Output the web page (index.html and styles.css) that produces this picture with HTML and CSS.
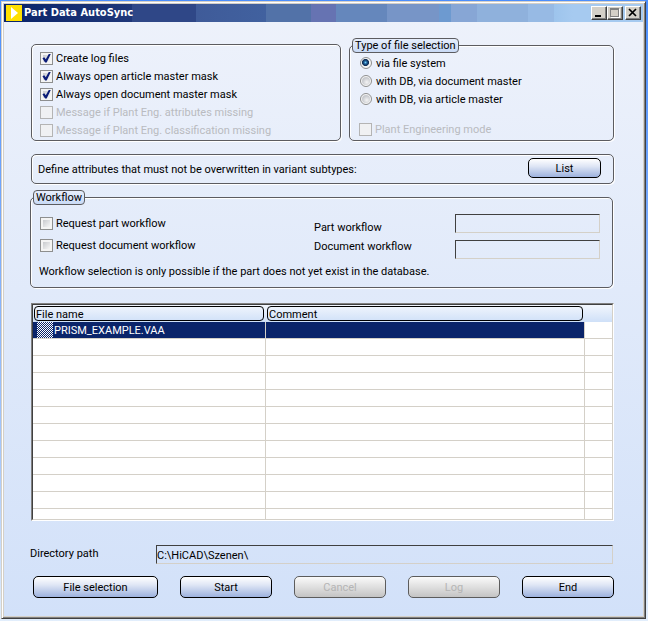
FILE: index.html
```html
<!DOCTYPE html>
<html lang="en">
<head>
<meta charset="utf-8">
<title>Part Data AutoSync</title>
<link rel="stylesheet" href="styles.css">
</head>
<body>
<main class="window">
  <header class="titlebar">
    <svg class="app-icon" viewBox="0 0 16 16" aria-hidden="true"><rect width="16" height="16" fill="#ffe000"/><path d="M5 2v12l7-6z" fill="#fff"/></svg>
    <h1 class="title">Part Data AutoSync</h1>
    <div class="window-controls">
      <button class="win-btn" aria-label="Minimize"><svg viewBox="0 0 12 10"><path d="M2 7h6v2H2z" fill="#000"/></svg></button>
      <button class="win-btn" aria-label="Maximize" disabled><svg viewBox="0 0 12 10" shape-rendering="crispEdges"><path d="M2 1h9v9H2z" fill="#fff"/><path d="M1 0h9v9H1zM2 2v6h7V2z" fill="#808080" fill-rule="evenodd"/><path d="M2 2h7v6H2z" fill="#d4d0c8"/></svg></button>
      <button class="win-btn win-close" aria-label="Close"><svg viewBox="0 0 12 10"><path d="M2 1l7 7M9 1l-7 7" stroke="#000" stroke-width="1.7"/></svg></button>
    </div>
  </header>
  <form class="content">
    <div class="options">
      <fieldset class="group general" aria-label="General options">
        <label class="option"><input type="checkbox" class="check" checked>Create log files</label>
        <label class="option"><input type="checkbox" class="check" checked>Always open article master mask</label>
        <label class="option"><input type="checkbox" class="check" checked>Always open document master mask</label>
        <label class="option off"><input type="checkbox" class="check" disabled>Message if Plant Eng. attributes missing</label>
        <label class="option off"><input type="checkbox" class="check" disabled>Message if Plant Eng. classification missing</label>
      </fieldset>
      <fieldset class="group source">
        <legend class="legend">Type of file selection</legend>
        <label class="option"><input type="radio" class="radio" name="source" checked>via file system</label>
        <label class="option"><input type="radio" class="radio" name="source">with DB, via document master</label>
        <label class="option"><input type="radio" class="radio" name="source">with DB, via article master</label>
        <label class="option off plant"><input type="checkbox" class="check" disabled>Plant Engineering mode</label>
      </fieldset>
    </div>
    <section class="group attributes">
      <span>Define attributes that must not be overwritten in variant subtypes:</span>
      <button type="button" class="btn list-btn">List</button>
    </section>
    <fieldset class="group workflow">
      <legend class="legend">Workflow</legend>
      <div class="workflow-grid">
        <div class="requests">
          <label class="option"><input type="checkbox" class="check">Request part workflow</label>
          <label class="option"><input type="checkbox" class="check">Request document workflow</label>
        </div>
        <div class="field-labels">
          <label for="part-wf">Part workflow</label>
          <label for="doc-wf">Document workflow</label>
        </div>
        <div class="fields">
          <input type="text" class="field" id="part-wf" readonly>
          <input type="text" class="field" id="doc-wf" readonly>
        </div>
      </div>
      <p class="note">Workflow selection is only possible if the part does not yet exist in the database.</p>
    </fieldset>
    <div class="list">
      <table class="files">
        <colgroup><col class="col-name"><col><col class="col-rest"></colgroup>
        <thead><tr><th><span class="head">File name</span></th><th><span class="head">Comment</span></th><th></th></tr></thead>
        <tbody>
          <tr class="selected"><td><span class="file"><span class="grip"></span>PRISM_EXAMPLE.VAA</span></td><td></td><td></td></tr>
          <tr><td></td><td></td><td></td></tr>
          <tr><td></td><td></td><td></td></tr>
          <tr><td></td><td></td><td></td></tr>
          <tr><td></td><td></td><td></td></tr>
          <tr><td></td><td></td><td></td></tr>
          <tr><td></td><td></td><td></td></tr>
          <tr><td></td><td></td><td></td></tr>
          <tr><td></td><td></td><td></td></tr>
          <tr><td></td><td></td><td></td></tr>
          <tr><td></td><td></td><td></td></tr>
          <tr class="last"><td></td><td></td><td></td></tr>
        </tbody>
      </table>
    </div>
    <div class="directory">
      <label for="dir">Directory path</label>
      <input type="text" class="field" id="dir" value="C:\HiCAD\Szenen\" readonly>
    </div>
    <div class="actions">
      <button type="button" class="btn wide">File selection</button>
      <button type="button" class="btn">Start</button>
      <button type="button" class="btn" disabled>Cancel</button>
      <button type="button" class="btn" disabled>Log</button>
      <button type="button" class="btn">End</button>
    </div>
  </form>
</main>
</body>
</html>
```
FILE: styles.css
```css
* { box-sizing: border-box; }

body {
  margin: 0;
  padding: 1px 2px 2px 1px;
  min-height: 100vh;
  background: linear-gradient(#4b8efc, #70a5fd 30%, #a9c9fb 75%, #e2eefc);
  font: 11px/14px Roboto, "Liberation Sans", sans-serif;
  color: #000;
}
button, input { font: inherit; color: inherit; }

.window {
  border: 1px solid;
  border-color: #d4d0c8 #404040 #404040 #d4d0c8;
  box-shadow: inset 1px 1px #fff, inset -1px -1px #808080, inset 2px 2px #d4d0c8, inset -2px -2px #d4d0c8;
  padding: 2px 2px 3px;
  background: linear-gradient(#eef2fb, #d2e1f9);
}

.titlebar {
  display: flex;
  align-items: center;
  height: 18px;
  padding: 0 2px;
  background: linear-gradient(90deg,
    #0a246a 0, #1f3779 20%, #2f4787 20%, #2f4787 30%, #3f5b99 30%, #41619f 41%,
    #5272a8 41%, #5272a8 48%, #6673b2 48%, #6673b2 52%, #6587bc 52%, #6587bc 60%,
    #7795c7 60%, #7795c7 68%, #6d9ad0 68%, #6d9ad0 70%, #87a6d5 70%, #87a6d5 74%,
    #8fb1dc 74%, #8fb1dc 82%, #97bae4 82%, #97bae4 86%, #9dc4ec 86%, #a6caf0 89%);
}
.app-icon { width: 16px; height: 16px; }
.title {
  flex: 1;
  margin: 0 0 0 2px;
  font: bold 11px/16px "DejaVu Sans Condensed", "DejaVu Sans", sans-serif;
  color: #fff;
}
.window-controls { display: flex; }
.win-btn {
  width: 16px;
  height: 14px;
  padding: 0 0 0 1px;
  border: 1px solid;
  border-color: #fff #404040 #404040 #fff;
  box-shadow: inset -1px -1px #808080;
  background: #d4d0c8;
}
.win-btn svg { display: block; width: 12px; height: 10px; }
.win-close { margin-left: 2px; }

.content { padding: 16px 29px 17px 27px; }

.group {
  min-width: 0;
  margin: 0;
  padding: 0 8px;
  border: 1px solid #5c5c60;
  border-radius: 5px;
  box-shadow: 1px 1px #fff, inset 1px 1px #fff;
}
.legend {
  margin-left: -7px;
  padding: 0 2px;
  border: 1px solid #5c5c60;
  border-radius: 4px;
  background: linear-gradient(#e6eefb, #c9daf6);
  line-height: 13px;
}

.options { display: grid; grid-template-columns: 310fr 265fr; gap: 8px; }
.general { margin-top: 6px; padding-top: 4px; padding-bottom: 1px; }
.source { padding: 1px 8px 2px 9px; }

.option { display: flex; align-items: center; gap: 3px; height: 18px; padding-top: 2px; white-space: nowrap; }
.off { color: #b9bbc0; }
.plant { margin-top: 12px; }

.check {
  appearance: none;
  flex: none;
  display: grid;
  place-content: center;
  width: 13px;
  height: 13px;
  margin: 0 0 2px;
  border: 1px solid #8e8f8f;
  background: linear-gradient(135deg, #c8cace, #f6f6f6) content-box, #f4f4f4;
  padding: 2px;
}
.check:checked::after {
  content: "";
  width: 9px;
  height: 9px;
  background: #0b1c78;
  clip-path: polygon(5% 52%, 25% 42%, 42% 65%, 78% 0, 100% 0, 52% 100%, 34% 100%);
}
.check:disabled { border-color: #b4b4b4; background: #f0f1f3; }
.radio {
  appearance: none;
  flex: none;
  width: 12px;
  height: 12px;
  margin: 0 1px 2px;
  border: 1px solid #8e8f8f;
  border-radius: 50%;
  background: radial-gradient(circle at 60% 65%, #f4f4f4, #c8cace 60%) content-box, #f6f6f6;
  padding: 1px;
}
.radio:checked { background: radial-gradient(circle at 45% 45%, #6fd0f5 0, #1f5c96 20%, #0b2a50 40%, #f4f4f4 50%); }

.attributes { display: flex; align-items: center; justify-content: space-between; height: 30px; margin-top: 13px; padding: 2px 12px 0 6px; }

.btn {
  width: 92px;
  height: 22px;
  padding: 1px 0 0;
  border: 1px solid #000;
  border-radius: 5px;
  background: linear-gradient(#fff, #dfe6f5 40%, #9db2de);
}
.btn:disabled { border-color: #5c5c5c; color: #b4b4b4; background: linear-gradient(#fafafa, #c4c4c4); }
.list-btn { width: 73px; height: 20px; margin-bottom: 4px; }
.wide { width: 125px; }

.workflow { margin: 6px 1px 0 -1px; padding: 0 12px 8px 9px; }
.workflow-grid { display: grid; grid-template-columns: 274fr 141fr 145fr; }
.requests { display: grid; gap: 4px; padding-top: 9px; align-content: start; }
.field-labels { display: grid; gap: 5px; padding-top: 16px; align-content: start; }
.fields { display: grid; gap: 7px; padding-top: 9px; }
.field {
  width: 100%;
  min-width: 0;
  height: 19px;
  padding: 1px 0 0;
  border: 1px solid;
  border-color: #404040 #d4d0c8 #d4d0c8 #404040;
  background: transparent;
  outline: 0;
}
.note { margin: 6px 0 0 -1px; }

.list {
  margin-top: 15px;
  border: 1px solid;
  border-color: #808080 #fff #fff #808080;
  overflow: hidden;
}
.files {
  width: 100%;
  table-layout: fixed;
  border-collapse: separate;
  border-spacing: 0;
  border: 1px solid;
  border-color: #404040 #d4d0c8 #d4d0c8 #404040;
  background: #fff;
}
.col-name { width: 233px; }
.col-rest { width: 27px; }
.files th, .files td { height: 17px; padding: 0; text-align: left; font-weight: normal; line-height: 14px; }
.files th { background: linear-gradient(#f2f6fd, #cfe0f8); }
.head { display: block; margin: 0 2px 0 1px; height: 15px; padding-left: 1px; border: 1px solid #000; border-radius: 4px; line-height: 15px; }
.files td { border: solid #d4d0c8; border-width: 0 1px 1px 0; }
.files td:last-child { border-right: 0; }
.files .last td { height: 10px; border-bottom: 0; }
.selected td:not(:last-child) { background: #0a246a; color: #fff; }
.file { display: flex; gap: 1px; height: 16px; line-height: 18px; padding-left: 4px; }
.grip { width: 16px; background: repeating-conic-gradient(#fff 0 25%, #0a246a 0 50%) 0 0 / 2px 2px; }

.directory { display: grid; grid-template-columns: 126px 1fr; margin: 24px 1px 0 -1px; }
.directory label { padding-top: 2px; }

.actions { display: flex; justify-content: space-between; margin-top: 12px; padding-left: 2px; }
```
